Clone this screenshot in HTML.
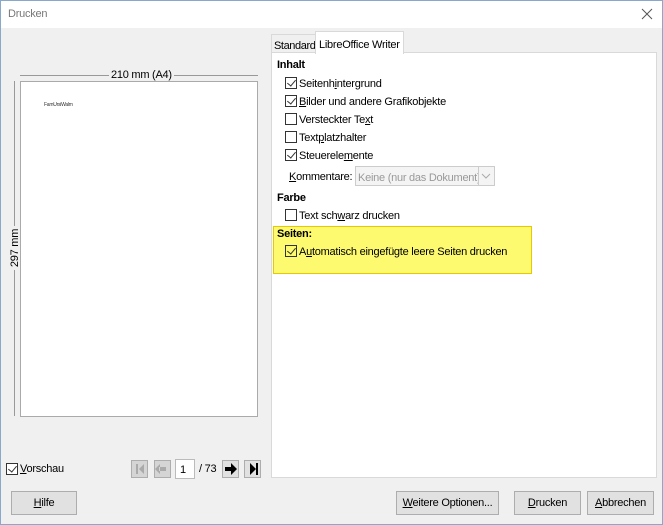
<!DOCTYPE html>
<html><head><meta charset="utf-8"><style>
*{box-sizing:border-box;margin:0;padding:0}
body{width:663px;height:525px;background:#f0f0f0;font-family:"Liberation Sans",sans-serif;font-size:11px;color:#000;position:relative;overflow:hidden;letter-spacing:-0.25px}
.a{position:absolute;white-space:nowrap}
.cb{position:absolute;width:12px;height:12px;border:1px solid #333;background:#fff}
.cb.c::after{content:"";position:absolute;left:3px;top:0px;width:4px;height:7px;border:solid #333;border-width:0 1px 1px 0;transform:rotate(40deg)}
.btn{position:absolute;height:24px;border:1px solid #adadad;background:#e1e1e1;text-align:center;line-height:23px}
u{text-decoration:underline}
.nb{position:absolute;top:460px;width:17px;height:18px;border:1px solid #adadad;background:#e1e1e1}
</style></head><body>
<div class="a" style="left:0;top:0;width:663px;height:28px;background:#fff"></div>
<div class="a" style="left:0;top:0;width:663px;height:525px;border:1px solid #8aa8cc"></div>
<div class="a" style="left:8px;top:8px;color:#777">Drucken</div>
<svg class="a" style="left:641px;top:8px" width="12" height="12"><path d="M1 1L11 11M11 1L1 11" stroke="#555" stroke-width="1"/></svg>

<div class="a" style="left:20px;top:75px;width:238px;height:1px;background:#999"></div>
<div class="a" style="left:109px;top:69px;background:#f0f0f0;padding:0 2px">210 mm (A4)</div>
<div class="a" style="left:14px;top:81px;width:1px;height:335px;background:#999"></div>
<div class="a" style="left:-7px;top:241px;transform:rotate(-90deg);background:#f0f0f0;width:44px;height:14px;text-align:center;line-height:14px">297 mm</div>
<div class="a" style="left:20px;top:81px;width:238px;height:336px;background:#fff;border:1px solid #aaa"></div>
<div class="a" style="left:44px;top:102px;font-size:5px;color:#333">FamUrsiWalm</div>

<div class="cb c" style="left:6px;top:463px"></div>
<div class="a" style="left:20px;top:463px"><u>V</u>orschau</div>
<div class="nb" style="left:131px;background:#d5d5d5"></div>
<div class="nb" style="left:154px;background:#d5d5d5"></div>
<svg class="a" style="left:131px;top:460px" width="40" height="18"><rect x="5" y="4" width="2" height="10" fill="#aaa"/><path d="M13 4L8 9L13 14Z" fill="#aaa"/><path d="M29 4L24 9L29 14Z M28 7h7v4h-7z" fill="#aaa"/></svg>
<div class="a" style="left:175px;top:459px;width:20px;height:20px;background:#fff;border:1px solid #bbb;padding:4px 0 0 4px">1</div>
<div class="a" style="left:199px;top:463px">/ 73</div>
<div class="nb" style="left:222px"></div>
<div class="nb" style="left:244px"></div>
<svg class="a" style="left:222px;top:460px" width="40" height="18"><path d="M3 7h6v-4l6 6l-6 6v-4h-6z" fill="#000"/><path d="M28 3L34 9L28 15Z" fill="#000"/><rect x="34" y="3" width="2" height="12" fill="#000"/></svg>

<div class="a" style="left:271px;top:34px;width:45px;height:19px;border:1px solid #d9d9d9;border-bottom:none;background:#f0f0f0;padding:5px 0 0 2px;letter-spacing:-0.4px">Standard</div>
<div class="a" style="left:315px;top:31px;width:89px;height:23px;border:1px solid #d9d9d9;border-bottom:none;background:#fff;padding:7px 0 0 3px;z-index:2">LibreOffice Writer</div>
<div class="a" style="left:271px;top:52px;width:386px;height:426px;background:#fff;border:1px solid #d9d9d9"></div>

<div class="a" style="left:277px;top:59px;font-weight:bold">Inhalt</div>
<div class="cb c" style="left:285px;top:77px"></div><div class="a" style="left:299px;top:78px">Seitenh<u>i</u>ntergrund</div>
<div class="cb c" style="left:285px;top:95px"></div><div class="a" style="left:299px;top:96px"><u>B</u>ilder und andere Grafikobjekte</div>
<div class="cb" style="left:285px;top:113px"></div><div class="a" style="left:299px;top:114px">Versteckter Te<u>x</u>t</div>
<div class="cb" style="left:285px;top:131px"></div><div class="a" style="left:299px;top:132px">Text<u>p</u>latzhalter</div>
<div class="cb c" style="left:285px;top:149px"></div><div class="a" style="left:299px;top:150px">Steuerele<u>m</u>ente</div>
<div class="a" style="left:289px;top:171px"><u>K</u>ommentare:</div>
<div class="a" style="left:355px;top:166px;width:140px;height:20px;border:1px solid #ccc;background:#f4f4f4;color:#999;padding:5px 0 0 2px">Keine (nur das Dokument)</div>
<div class="a" style="left:478px;top:167px;width:16px;height:18px;border-left:1px solid #ccc;background:#f4f4f4"></div>
<svg class="a" style="left:481px;top:173px" width="10" height="6"><path d="M1 1L5 5L9 1" stroke="#aaa" fill="none"/></svg>
<div class="a" style="left:277px;top:192px;font-weight:bold">Farbe</div>
<div class="cb" style="left:285px;top:209px"></div><div class="a" style="left:299px;top:210px">Text sch<u>w</u>arz drucken</div>

<div class="a" style="left:273px;top:226px;width:259px;height:48px;background:#fdfa70;border:1px solid #e8c800"></div>
<div class="a" style="left:277px;top:228px;font-weight:bold">Seiten:</div>
<div class="cb c" style="left:285px;top:245px;background:transparent"></div><div class="a" style="left:299px;top:246px">A<u>u</u>tomatisch eingefügte leere Seiten drucken</div>

<div class="btn" style="left:11px;top:491px;width:66px"><u>H</u>ilfe</div>
<div class="btn" style="left:396px;top:491px;width:103px"><u>W</u>eitere Optionen...</div>
<div class="btn" style="left:514px;top:491px;width:67px"><u>D</u>rucken</div>
<div class="btn" style="left:587px;top:491px;width:67px"><u>A</u>bbrechen</div>
</body></html>
